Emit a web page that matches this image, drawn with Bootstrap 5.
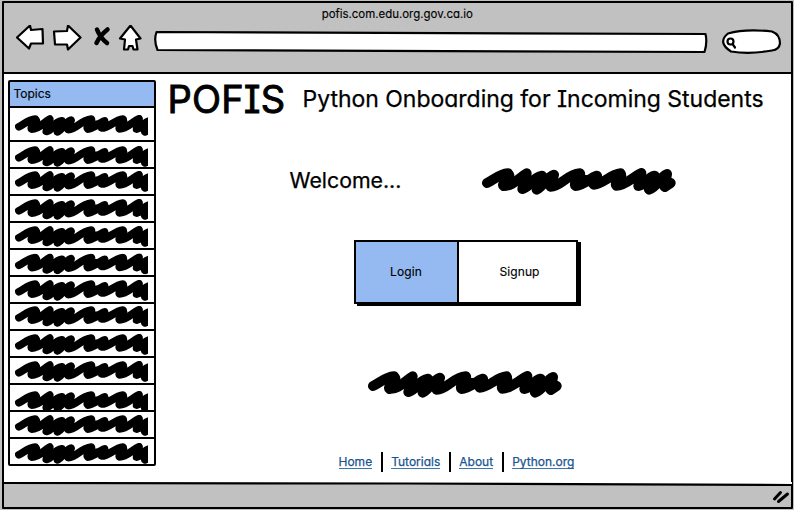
<!DOCTYPE html>
<html lang="en">
<head>
<meta charset="utf-8">
<meta name="viewport" content="width=device-width, initial-scale=1">
<title>POFIS</title>
<link href="https://cdn.jsdelivr.net/npm/bootstrap@5.3.0/dist/css/bootstrap.min.css" rel="stylesheet">
<style>
  body { width: 794px; height: 510px; overflow: hidden; background: #c1c1c1; color: #000;
    font-family: Inter, "Liberation Sans", sans-serif; font-feature-settings: "cv11", "cv08"; line-height: 1;
    -webkit-text-stroke: .15px #000; }
  svg { display: block; flex: none; }
  .ink { fill: #fff; stroke: #000; stroke-width: 2.2; stroke-linejoin: round; stroke-linecap: round; }
  .window { height: 508px; margin: 1px 1px 0 1.5px; border: 2px solid #000; border-radius: 1px; }
  .chrome { height: 71px; background: #c1c1c1; border-bottom: 2px solid #000; }
  .site-title { font-size: 11.45px; height: 22px; padding-top: 6px; }
  .tools { padding-left: 12px; }
  .page { height: 408px; padding: 6px 0 0 4px; }
  .topics { width: 148px; height: 386px; border: 2.5px solid #000; border-radius: 2px; }
  .topics-head { height: 26px; background: #94baf1; border-bottom: 2.5px solid #000; font-size: 12px; padding: 6px 0 0 4px; }
  .topic { height: 27px; border-bottom: 2.5px solid #000; padding-left: 5px; overflow: hidden; }
  .topic:last-child { border-bottom: 0; }
  .topic-tall { height: 34px; }
  .main-col { padding-left: 12px; }
  .headline { height: 76px; }
  .brand { font-size: 38px; letter-spacing: .2px; width: 135px; -webkit-text-stroke: .9px #000; }
  .tagline { font-size: 23px; padding-top: 8px; -webkit-text-stroke: .25px #000; letter-spacing: -.02px; }
  .welcome { height: 84px; padding-left: 122px; }
  .welcome-text { font-size: 21.3px; width: 192px; padding-top: 14px; -webkit-text-stroke: .25px #000; }
  .blot { margin-top: 12px; }
  .choice { width: 224px; height: 64px; margin-left: 186px; border: 2px solid #000; box-shadow: 3px 2px 0 #000; font-size: 12px; letter-spacing: .1px; }
  .pick-on { width: 103px; background: #94baf1; border-right: 2px solid #000; }
  .pick-off { padding-left: 5px; }
  .note { height: 148px; padding: 67px 0 0 200px; }
  .links { padding-left: 171px; font-size: 12px; height: 20px; gap: 8.5px; }
  .links a { color: #1a5590; text-decoration: none; border-bottom: 1.5px solid #3b77ad; line-height: 12px; -webkit-text-stroke: .25px #1a5590; }
  .bar { width: 2px; height: 20px; background: #000; }
  .status { height: 24px; }
</style>
</head>
<body>
<svg width="0" height="0" class="position-absolute">
  <symbol id="scribble" viewBox="0 0 582 80" preserveAspectRatio="xMinYMin meet">
    <g fill="none" stroke="#000" stroke-width="30" stroke-linejoin="round" stroke-linecap="round">
      <path d="M15 45C35 36 52 18 78 16C84 30 56 48 65 54C94 54 109 30 134 16L121 63C148 57 149 27 180 23L164 65C185 54 193 28 216 20L206 56C238 56 252 20 294 16C300 27 271 47 281 54C304 54 325 28 345 23L335 50C362 50 384 19 416 16C423 27 395 46 403 53C430 53 452 27 478 15L469 54C488 52 496 28 518 23L501 65C525 59 532 28 555 18L548 57L566 45"/>
      <path stroke-width="34" d="M132 46L210 42M290 37L335 38M476 42L555 44M70 38L80 22M282 40L292 24M404 40L416 24"/>
    </g>
  </symbol>
</svg>
<div class="window d-flex flex-column">
  <header class="chrome flex-shrink-0">
    <div class="site-title text-center">pofis.com.edu.org.gov.ca.io</div>
    <div class="tools d-flex">
      <svg width="772" height="30" viewBox="16 24.500 772 30">
        <g class="ink">
          <path d="M17 37L30 25L31 29.500L42.500 28.500L43 43L31 43L29 48Z"/>
          <path d="M54 31L67 30.500L68 25L80.500 37L68 49L67 44L55 44Z"/>
          <path d="M130.500 25L140.500 38L136 39L137.500 49L133.500 49L132.500 45.500L129 45.500L128 49L124 49L125 39L120 38Z"/>
          <path d="M156.500 31.500Q430 33 705.500 33.500Q707.500 42 704.500 51.500Q430 50.500 157.500 49.500Q153.500 40 156.500 31.500Z"/>
          <path d="M728 33Q745 28 772 31Q780 34 780 43Q779 49 772 50Q750 54 731 51Q717 42 728 33Z"/>
        </g>
        <path d="M97 29Q100 37 107 42.500M107.500 29Q100 35 96.500 42.500" fill="none" stroke="#000" stroke-width="4.500" stroke-linecap="round"/>
        <path d="M727.500 41A3 3 0 1 1 733.500 41A3 3 0 1 1 727.500 41M732.500 43.500L735 47" fill="none" stroke="#000" stroke-width="2.200" stroke-linecap="round"/>
      </svg>
    </div>
  </header>
  <div class="page d-flex bg-white flex-shrink-0">
    <aside class="topics flex-shrink-0">
      <div class="topics-head">Topics</div>
      <div id="rows"></div>
    </aside>
    <main class="main-col flex-grow-1">
      <div class="headline d-flex text-nowrap">
        <div class="brand">POFIS</div>
        <div class="tagline">Python Onboarding for Incoming Students</div>
      </div>
      <div class="welcome d-flex">
        <div class="welcome-text">Welcome...</div>
        <svg width="194" height="27" class="blot"><use href="#scribble" width="194" height="27"/></svg>
      </div>
      <div class="choice d-flex">
        <div class="pick-on d-flex align-items-center justify-content-center">Login</div>
        <div class="pick-off flex-grow-1 d-flex align-items-center justify-content-center">Signup</div>
      </div>
      <div class="note"><svg width="194" height="27"><use href="#scribble" width="194" height="27"/></svg></div>
      <nav class="links d-flex align-items-center">
        <a href="#">Home</a><span class="bar"></span><a href="#">Tutorials</a><span class="bar"></span><a href="#">About</a><span class="bar"></span><a href="#">Python.org</a>
      </nav>
    </main>
  </div>
  <footer class="status">
    <svg width="788" height="24" viewBox="0 0 788 24">
      <path d="M0 0H788V3L500 1L0 1Z" fill="#fff"/>
      <path d="M0 1L400 1.500L788 3" fill="none" stroke="#000" stroke-width="2.200"/>
      <path d="M770.500 17L776.500 10.500M774.500 19.500L783.500 12" stroke="#000" stroke-width="3" stroke-linecap="round"/>
    </svg>
  </footer>
</div>
<script src="https://cdn.jsdelivr.net/npm/bootstrap@5.3.0/dist/js/bootstrap.bundle.min.js"></script>
<script>
  // Top gap above the scribble in each topic row
  const gaps = [7, 4, 2, 3, 3, 3.5, 3, 2, 3, 3, 6, 3, 4];
  document.getElementById('rows').innerHTML = gaps.map((g, i) =>
    `<div class="topic${i ? '' : ' topic-tall'}"><svg width="133" height="30" viewBox="0 ${-g} 133 30"><use href="#scribble" width="151" height="21"/></svg></div>`).join('');
</script>
</body>
</html>
